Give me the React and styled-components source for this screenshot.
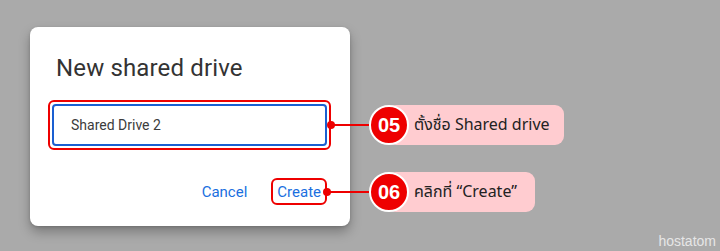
import React from "react";
import styled, { createGlobalStyle } from "styled-components";

const Global = createGlobalStyle`
  html, body { margin: 0; padding: 0; }
  body { background: #aaaaaa; width: 720px; height: 251px; overflow: hidden; }
`;

const Page = styled.div`
  position: relative;
  width: 720px;
  height: 251px;
  box-sizing: border-box;
  padding: 27px 0 0 30px;
  display: flex;
  align-items: flex-start;
  font-family: Roboto, "Liberation Sans", sans-serif;
`;

const Dialog = styled.div`
  width: 320px;
  height: 199px;
  box-sizing: border-box;
  background: #ffffff;
  border-radius: 8px;
  box-shadow: 0 6px 12px rgba(0, 0, 0, 0.28), 0 1px 3px rgba(0, 0, 0, 0.15);
  padding: 25px 23px 0 22px;
  display: flex;
  flex-direction: column;
`;

const Title = styled.h1`
  margin: 0;
  padding-left: 4px;
  font-family: Roboto, "Open Sans", sans-serif;
  font-weight: 400;
  font-size: 24px;
  letter-spacing: 0.15px;
  line-height: 32px;
  color: #333333;
`;

const Highlight = styled.div`
  position: relative;
  align-self: ${(p) => (p.$inline ? "flex-start" : "stretch")};
  border: 2px solid #ee0000;
  border-radius: 6px;
  padding: ${(p) => (p.$inline ? "0" : "2px")};
  margin: ${(p) => p.$margin || "0"};
  &::after {
    content: "";
    position: absolute;
    right: -6px;
    top: 50%;
    width: 8px;
    height: 8px;
    margin-top: -4px;
    border-radius: 50%;
    background: #ee0000;
  }
`;

const Input = styled.div`
  height: 42px;
  box-sizing: border-box;
  border: 2px solid #1a5fd1;
  border-radius: 4px;
  padding-left: 17px;
  display: flex;
  align-items: center;
  font-family: Roboto, sans-serif;
  font-size: 14px;
  color: #3c3c3c;
`;

const Actions = styled.div`
  margin-top: 28px;
  display: flex;
  justify-content: flex-end;
  align-items: center;
`;

const TextButton = styled.button`
  border: none;
  background: transparent;
  padding: 0 4px;
  height: 23px;
  font-family: Roboto, sans-serif;
  font-weight: 400;
  font-size: 15px;
  color: #1a6fe0;
  cursor: pointer;
  margin: ${(p) => p.$margin || "0"};
`;

const Callouts = styled.div`
  margin-left: 19px;
  margin-top: 78px;
  display: flex;
  flex-direction: column;
  gap: 27px;
`;

const Callout = styled.div`
  position: relative;
  display: flex;
  align-items: center;
  &::before {
    content: "";
    position: absolute;
    top: 50%;
    right: 100%;
    width: ${(p) => p.$line}px;
    height: 2px;
    margin-top: -1px;
    background: #ee0000;
  }
`;

const Badge = styled.div`
  position: relative;
  z-index: 1;
  width: 40px;
  height: 40px;
  box-sizing: border-box;
  border-radius: 50%;
  border: 2.5px solid #ffffff;
  background: #ee0000;
  color: #ffffff;
  display: flex;
  align-items: center;
  justify-content: center;
  font-family: "Liberation Sans", sans-serif;
  font-weight: 700;
  font-size: 20px;
  flex: none;
`;

const Pill = styled.div`
  margin-left: -22px;
  height: 40px;
  box-sizing: border-box;
  padding: 0 14px 0 27px;
  background: #ffccd0;
  border-radius: 9px;
  display: flex;
  align-items: center;
  font-family: "Noto Sans Thai", Tahoma, "Noto Sans", "DejaVu Sans", sans-serif;
  font-size: 16px;
  color: #222222;
  white-space: pre;
`;

const Watermark = styled.div`
  position: absolute;
  right: 4px;
  bottom: 2px;
  font-family: "Liberation Sans", sans-serif;
  font-size: 14px;
  color: #e6e6e6;
`;

export default function App() {
  return (
    <>
      <Global />
      <Page>
        <Dialog>
          <Title>New shared drive</Title>
          <Highlight $margin="16px -4px 0 -4px">
            <Input>Shared Drive 2</Input>
          </Highlight>
          <Actions>
            <TextButton $margin="0 20px 0 0">Cancel</TextButton>
            <Highlight $inline>
              <TextButton>Create</TextButton>
            </Highlight>
          </Actions>
        </Dialog>
        <Callouts>
          <Callout $line={38}>
            <Badge>05</Badge>
            <Pill>ตั้งชื่อ Shared drive</Pill>
          </Callout>
          <Callout $line={41}>
            <Badge>06</Badge>
            <Pill>คลิกที่ “Create” </Pill>
          </Callout>
        </Callouts>
        <Watermark>hostatom</Watermark>
      </Page>
    </>
  );
}
